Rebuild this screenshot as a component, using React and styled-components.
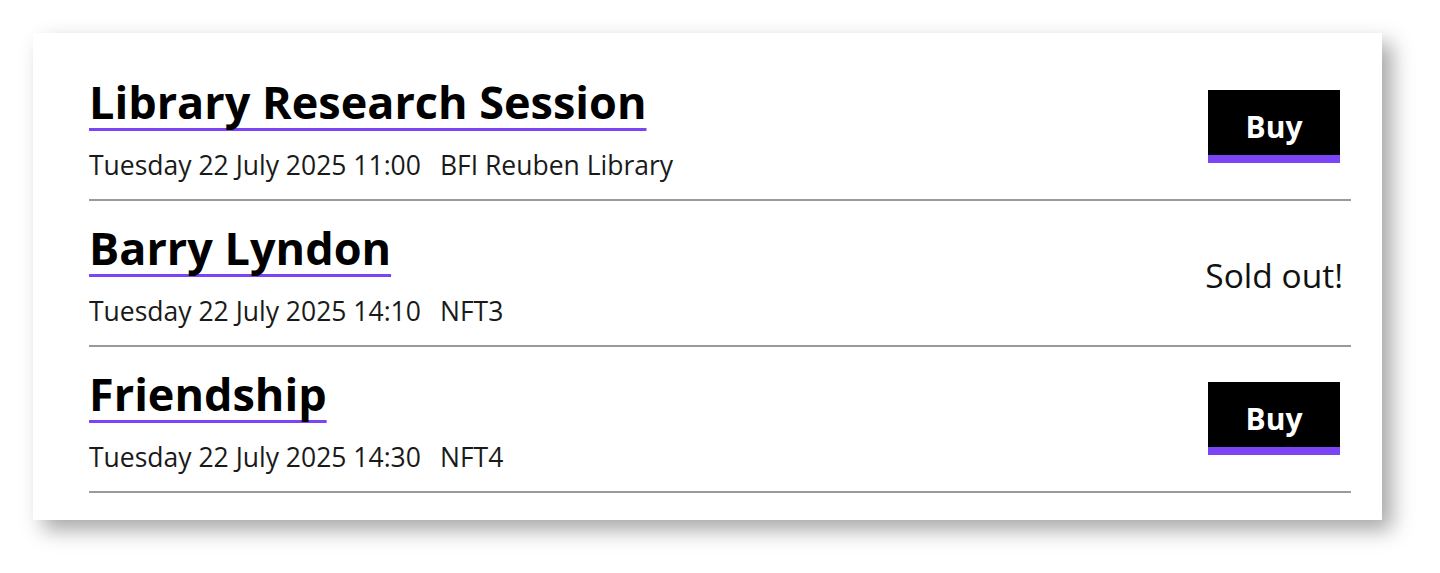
import React from 'react';
import styled, {createGlobalStyle} from 'styled-components';

const GlobalStyle = createGlobalStyle`
    body{
        margin:0;
        background:#ffffff;
        font-family:"Open Sans", "Noto Sans", sans-serif;
    }
`;

const Page = styled.div`
    padding:33px 58px 40px 33px;
`;

const Card = styled.div`
    width:1349px;
    background:#fff;
    box-shadow: 10px 10px 20px rgba(0,0,0,0.35);
    padding:22px 31px 27px 56px;
    box-sizing:border-box;
`;

const Row = styled.div`
    display:flex;
    flex-direction:row;
    justify-content:space-between;
    align-items:center;
    padding:19px 0 16px 0;
    border-bottom:2px solid #9a9a9a;
`;

const Info = styled.div`
    display:flex;
    flex-direction:column;
    align-items:flex-start;
`;

const Title = styled.a`
    font-size:45px;
    font-weight:700;
    line-height:56px;
    color:#000;
    text-decoration:underline;
    text-decoration-color:#7b45f5;
    text-decoration-thickness:3px;
    text-underline-offset:9px;
    text-decoration-skip-ink:none;
`;

const When = styled.div`
    margin-top:17px;
    font-size:26.5px;
    line-height:36px;
    color:#1a1a1a;
    & span{
        margin-left:19px;
    }
`;

const BuyButton = styled.button`
    width:132px;
    height:73px;
    margin:0 11px 4px 0;
    padding:8px 0 0 0;
    background:#000;
    color:#fff;
    border:none;
    border-bottom:8px solid #7b45f5;
    font-family:"Open Sans", sans-serif;
    font-weight:700;
    font-size:30px;
    cursor:pointer;
`;

const SoldOut = styled.div`
    font-size:33.5px;
    color:#111;
    margin-right:8px;
`;

const events = [
    {id:1, title:'Library Research Session', when:'Tuesday 22 July 2025 11:00', venue:'BFI Reuben Library', soldOut:false},
    {id:2, title:'Barry Lyndon', when:'Tuesday 22 July 2025 14:10', venue:'NFT3', soldOut:true},
    {id:3, title:'Friendship', when:'Tuesday 22 July 2025 14:30', venue:'NFT4', soldOut:false},
];

const App = () => {
    return (
        <>
            <GlobalStyle/>
            <Page>
                <Card>
                    {events.map(ev => <Row key={ev.id}>
                                            <Info>
                                                <Title>{ev.title}</Title>
                                                <When>{ev.when}<span>{ev.venue}</span></When>
                                            </Info>
                                            {ev.soldOut
                                                ? <SoldOut>Sold out!</SoldOut>
                                                : <BuyButton>Buy</BuyButton>}
                                        </Row>)}
                </Card>
            </Page>
        </>
    )
}

export default App;
